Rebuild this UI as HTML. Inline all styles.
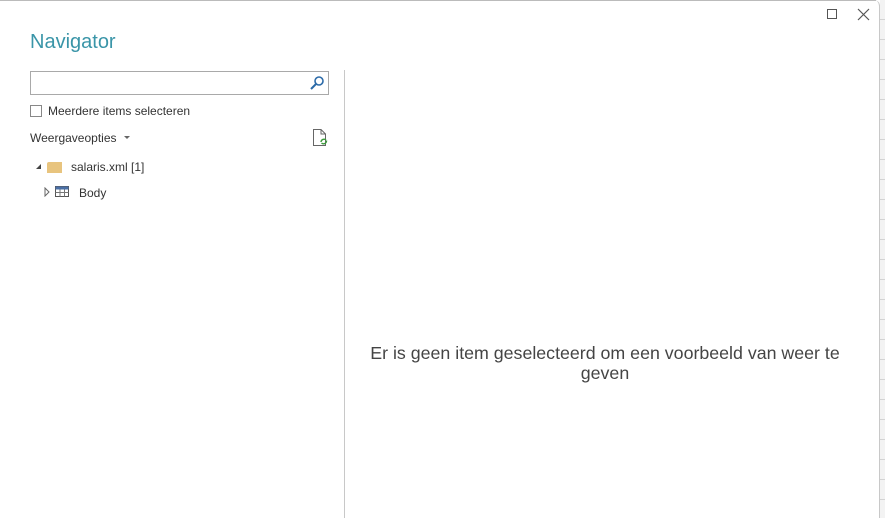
<!DOCTYPE html>
<html><head><style>
body{margin:0;width:885px;height:518px;position:relative;overflow:hidden;background:#fff;font-family:"Liberation Sans",sans-serif;}
.bg{position:absolute;left:880px;top:0;width:5px;height:518px;background:repeating-linear-gradient(#f3f3f3 0 19px,#d4d4d4 19px 20px);}
.dlg{position:absolute;left:0;top:0;width:880px;height:518px;background:#fff;border-right:1px solid #c8c8c8;border-top-right-radius:6px;box-sizing:border-box;}
.t{position:absolute;color:#333;font-size:12px;}
</style></head><body>
<div class="bg"></div>
<div class="dlg"></div>
<div style="position:absolute;left:0;top:0;width:876px;height:1px;background:#bbb"></div>
<div class="t" style="left:30px;top:31px;font-size:20px;color:#3a95a8;">Navigator</div>
<svg style="position:absolute;left:826px;top:8px" width="12" height="12"><rect x="1.5" y="1.5" width="9" height="9" fill="none" stroke="#555"/></svg>
<svg style="position:absolute;left:857px;top:8px" width="13" height="13"><path d="M1 1L12 12M12 1L1 12" stroke="#555" stroke-width="1.2"/></svg>
<div style="position:absolute;left:30px;top:71px;width:299px;height:24px;border:1px solid #a9a9a9;box-sizing:border-box"></div>
<svg style="position:absolute;left:309px;top:75px" width="16" height="16"><circle cx="10" cy="6" r="4" fill="none" stroke="#2b6aa8" stroke-width="1.6"/><path d="M7 9L2 14" stroke="#2b6aa8" stroke-width="2"/></svg>
<div style="position:absolute;left:30px;top:105px;width:12px;height:12px;border:1px solid #888;box-sizing:border-box"></div>
<div class="t" style="left:48px;top:104px;">Meerdere items selecteren</div>
<div class="t" style="left:30px;top:131px;">Weergaveopties</div>
<div style="position:absolute;left:124px;top:136px;border-left:3px solid transparent;border-right:3px solid transparent;border-top:3px solid #666"></div>
<svg style="position:absolute;left:311px;top:128px" width="18" height="20"><path d="M2.5 1.5H10L14.5 6V17.5H2.5Z" fill="none" stroke="#666"/><path d="M10 1.5V6H14.5" fill="none" stroke="#666"/><path d="M10 14a3 3 0 0 1 5-2M15.5 12.5a3 3 0 0 1-5 2.5" fill="none" stroke="#3a9a3a" stroke-width="1.4"/></svg>
<div style="position:absolute;left:36px;top:164px;border-left:5px solid transparent;border-bottom:5px solid #444"></div>
<div style="position:absolute;left:47px;top:162px;width:15px;height:11px;background:#e8c47e;border-top-left-radius:2px"></div>
<div class="t" style="left:71px;top:160px;">salaris.xml [1]</div>
<svg style="position:absolute;left:44px;top:187px" width="6" height="10"><path d="M1 1L5 5L1 9Z" fill="none" stroke="#666"/></svg>
<svg style="position:absolute;left:55px;top:186px" width="14" height="11"><rect x=".5" y=".5" width="13" height="10" fill="#fff" stroke="#555"/><rect x=".5" y=".5" width="13" height="3" fill="#4a6fa5"/><path d="M.5 6.5H13.5M5 3.5V10.5M9.5 3.5V10.5" stroke="#777"/></svg>
<div class="t" style="left:79px;top:186px;">Body</div>
<div style="position:absolute;left:344px;top:70px;width:1px;height:448px;background:#c8c8c8"></div>
<div class="t" style="left:358px;top:343px;width:494px;text-align:center;font-size:17.8px;color:#444;line-height:20px">Er is geen item geselecteerd om een voorbeeld van weer te geven</div>
</body></html>
